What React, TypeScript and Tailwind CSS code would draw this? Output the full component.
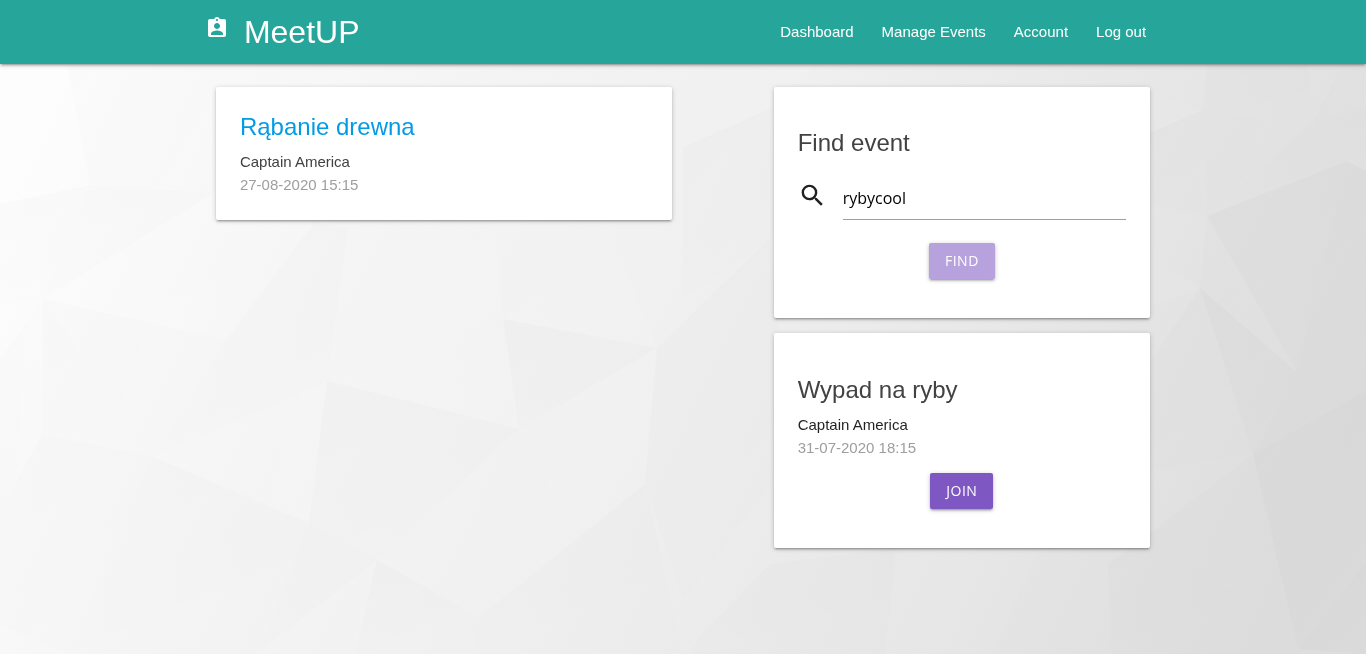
import React from "react";
import { MdAssignmentInd, MdSearch } from "react-icons/md";

const elevation =
  "shadow-[0_2px_2px_0_rgba(0,0,0,0.14),0_3px_1px_-2px_rgba(0,0,0,0.12),0_1px_5px_0_rgba(0,0,0,0.2)]";

const links = ["Dashboard", "Manage Events", "Account", "Log out"];

type Facet = { points: string; fill: string };

const facets: Facet[] = [
  { points: "67,65 90,185 213,193 330,65", fill: "url(#darkRight)" },
  { points: "0,65 67,65 90,185 20,135", fill: "url(#lightDown)" },
  { points: "0,204 90,185 43,299 0,305", fill: "url(#darkDown)" },
  { points: "90,185 213,193 43,299", fill: "url(#darkDown)" },
  { points: "43,299 213,190 226,340", fill: "url(#lightDown)" },
  { points: "43,299 226,340 153,457", fill: "url(#darkRight)" },
  { points: "43,299 153,457 42,434", fill: "url(#darkDown)" },
  { points: "0,359 43,299 42,434 0,511", fill: "url(#darkRight)" },
  { points: "42,434 153,457 68,654 0,625 0,511", fill: "url(#darkDown)" },
  { points: "226,340 314,223 348,227 327,381 153,457", fill: "url(#darkDown)" },
  { points: "153,457 327,381 309,523", fill: "url(#lightRight)" },
  { points: "153,457 309,523 257,654 68,654", fill: "url(#darkDown)" },
  { points: "327,381 503,319 519,429", fill: "url(#lightDown)" },
  { points: "327,381 519,429 377,560 309,523", fill: "url(#darkDown)" },
  { points: "309,523 377,560 257,654", fill: "url(#darkDown)" },
  { points: "377,560 479,617 475,654 355,654", fill: "url(#darkDown)" },
  { points: "348,227 436,234 503,319 327,381", fill: "url(#lightRight)" },
  { points: "436,234 496,223 503,319", fill: "url(#lightDown)" },
  { points: "503,319 657,348 519,429", fill: "url(#darkDown)" },
  { points: "503,319 610,230 657,348", fill: "url(#lightDown)" },
  { points: "519,429 657,348 645,484 479,617", fill: "url(#lightRight)" },
  { points: "657,348 770,238 790,460 683,600 645,484", fill: "url(#darkDown)" },
  { points: "479,617 645,484 683,654 475,654", fill: "url(#darkDown)" },
  { points: "683,147 770,109 774,238 683,299", fill: "url(#darkDown)" },
  { points: "683,65 815,65 770,109 683,147", fill: "url(#lightRight)" },
  { points: "700,636 770,564 896,548 885,654 690,654", fill: "url(#darkDown)" },
  { points: "896,548 1040,548 992,654 885,654", fill: "url(#lightRight)" },
  { points: "1150,92 1203,110 1150,133", fill: "url(#lightRight)" },
  { points: "1203,110 1207,65 1308,65 1313,122", fill: "url(#darkDown)" },
  { points: "1150,133 1203,110 1207,216 1150,205", fill: "url(#darkDown)" },
  { points: "1203,110 1313,122 1207,216", fill: "url(#darkRight)" },
  { points: "1313,122 1342,65 1366,65 1366,106", fill: "url(#darkRight)" },
  { points: "1313,122 1366,106 1366,158 1347,161", fill: "url(#darkDown)" },
  { points: "1207,216 1313,122 1347,161", fill: "url(#darkDown)" },
  { points: "1207,216 1347,161 1297,372", fill: "url(#darkStrong)" },
  { points: "1347,161 1366,171 1366,391 1253,454 1297,372", fill: "url(#darkStrong)" },
  { points: "1200,288 1207,216 1297,372", fill: "url(#darkRight)" },
  { points: "1150,258 1200,288 1150,306", fill: "url(#lightRight)" },
  { points: "1150,363 1200,288 1253,454 1150,470", fill: "url(#darkDown)" },
  { points: "1200,288 1297,372 1253,454", fill: "url(#darkStrong)" },
  { points: "1157,528 1253,454 1298,649", fill: "url(#darkDown)" },
  { points: "1253,454 1366,391 1366,563 1298,649", fill: "url(#darkStrong)" },
  { points: "1298,649 1366,563 1366,654", fill: "url(#darkStrong)" },
  { points: "1108,564 1157,528 1298,649 1298,654 1111,654", fill: "url(#darkDown)" },
];

function Backdrop() {
  return (
    <svg
      className="fixed inset-0 -z-10 h-full w-full"
      viewBox="0 0 1366 654"
      preserveAspectRatio="xMidYMid slice"
      aria-hidden="true"
    >
      <defs>
        <linearGradient id="base" gradientUnits="userSpaceOnUse" x1="60" y1="80" x2="1240" y2="660">
          <stop offset="0" stopColor="#fdfdfd" />
          <stop offset="0.25" stopColor="#f5f5f5" />
          <stop offset="0.5" stopColor="#f0f0f0" />
          <stop offset="0.75" stopColor="#e7e7e7" />
          <stop offset="1" stopColor="#dddddd" />
        </linearGradient>
        <linearGradient id="darkDown" x1="0" y1="0" x2="0.5" y2="1">
          <stop offset="0" stopColor="#000" stopOpacity="0.014" />
          <stop offset="1" stopColor="#000" stopOpacity="0.004" />
        </linearGradient>
        <linearGradient id="darkRight" x1="0" y1="0.3" x2="1" y2="0.6">
          <stop offset="0" stopColor="#000" stopOpacity="0.01" />
          <stop offset="1" stopColor="#000" stopOpacity="0.002" />
        </linearGradient>
        <linearGradient id="darkStrong" x1="0" y1="0" x2="0.6" y2="1">
          <stop offset="0" stopColor="#000" stopOpacity="0.028" />
          <stop offset="1" stopColor="#000" stopOpacity="0.014" />
        </linearGradient>
        <linearGradient id="lightDown" x1="0" y1="0" x2="0.4" y2="1">
          <stop offset="0" stopColor="#fff" stopOpacity="0.02" />
          <stop offset="1" stopColor="#fff" stopOpacity="0.08" />
        </linearGradient>
        <linearGradient id="lightRight" x1="0" y1="0.4" x2="1" y2="0.6">
          <stop offset="0" stopColor="#fff" stopOpacity="0.02" />
          <stop offset="1" stopColor="#fff" stopOpacity="0.06" />
        </linearGradient>
      </defs>
      <rect width="1366" height="654" fill="url(#base)" />
      {facets.map((f) => (
        <polygon key={f.points} points={f.points} fill={f.fill} />
      ))}
    </svg>
  );
}

function Card({ children }: { children: React.ReactNode }) {
  return <section className={`rounded-[2px] bg-white px-6 ${elevation}`}>{children}</section>;
}

function ActionButton({
  children,
  tone,
  type = "button",
}: {
  children: React.ReactNode;
  tone: string;
  type?: "button" | "submit";
}) {
  return (
    <button
      type={type}
      className={`h-9 rounded-[2px] px-4 font-['Open_Sans','Noto_Sans',sans-serif] text-[14px] leading-9 tracking-[0.5px] text-white uppercase ${tone} ${elevation}`}
    >
      {children}
    </button>
  );
}

export default function App() {
  return (
    <div className="min-h-screen font-['Liberation_Sans',Arial,sans-serif] text-[15px] leading-[23px] text-black/87">
      <Backdrop />
      <header className={`bg-[#26a69a] text-white ${elevation}`}>
        <nav className="mx-auto flex h-16 w-[70%] items-center justify-between">
          <a href="#" className="flex h-16 gap-[15px]">
            <MdAssignmentInd className="mt-4 size-6" />
            <span className="text-[32px] leading-16">MeetUP</span>
          </a>
          <ul className="flex gap-7 pr-[15px]">
            {links.map((label) => (
              <li key={label}>
                <a href="#" className="block leading-[66px]">
                  {label}
                </a>
              </li>
            ))}
          </ul>
        </nav>
      </header>

      <main className="mx-auto grid w-[70%] grid-cols-12 items-start pt-[23px]">
        <div className="col-span-6 px-[11px]">
          <Card>
            <div className="py-6">
              <h2 className="mb-[7px] text-[24px] leading-8">
                <a href="#" className="text-[#039be5]">
                  Rąbanie drewna
                </a>
              </h2>
              <p className="text-[#424242]">Captain America</p>
              <p className="text-[#9e9e9e]">27-08-2020 15:15</p>
            </div>
          </Card>
        </div>

        <div className="col-span-5 col-start-8 flex flex-col gap-[15px] px-[11px]">
          <Card>
            <form className="flex flex-col pt-10 pb-[39px]" onSubmit={(e) => e.preventDefault()}>
              <h2 className="mb-[17px] text-[24px] leading-8 text-[#424242]">Find event</h2>
              <div className="flex gap-4">
                <label htmlFor="event-code" aria-label="Event code" className="pt-[5px]">
                  <MdSearch className="size-[29px]" />
                </label>
                <input
                  id="event-code"
                  type="text"
                  defaultValue="rybycool"
                  className="h-11 min-w-0 flex-1 border-b border-[#9e9e9e] bg-transparent font-['Open_Sans','Noto_Sans',sans-serif] text-[16px] text-black outline-none"
                />
              </div>
              <div className="mt-[23px] flex justify-center">
                <ActionButton type="submit" tone="bg-[#b8a2de]">
                  Find
                </ActionButton>
              </div>
            </form>
          </Card>

          <Card>
            <div className="pt-[41px] pb-[39px]">
              <h2 className="mb-[7px] text-[24px] leading-8 text-[#424242]">Wypad na ryby</h2>
              <p>Captain America</p>
              <p className="text-[#9e9e9e]">31-07-2020 18:15</p>
              <div className="mt-[14px] flex justify-center">
                <ActionButton tone="bg-[#7e57c2]">Join</ActionButton>
              </div>
            </div>
          </Card>
        </div>
      </main>
    </div>
  );
}
